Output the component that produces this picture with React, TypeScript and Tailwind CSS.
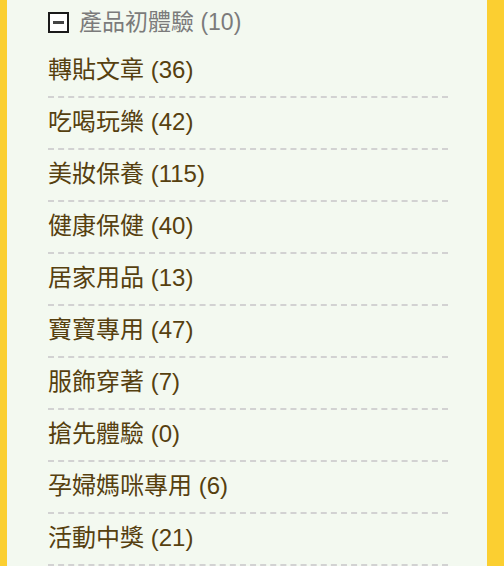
const items = [
  { name: '轉貼文章', count: 36 },
  { name: '吃喝玩樂', count: 42 },
  { name: '美妝保養', count: 115 },
  { name: '健康保健', count: 40 },
  { name: '居家用品', count: 13 },
  { name: '寶寶專用', count: 47 },
  { name: '服飾穿著', count: 7 },
  { name: '搶先體驗', count: 0 },
  { name: '孕婦媽咪專用', count: 6 },
  { name: '活動中獎', count: 21 },
];

export default function App() {
  return (
    <div
      className="h-[566px] w-[504px] overflow-hidden bg-[#fbcf31] pl-[7px] pr-[17px]"
      style={{ fontFamily: '"Liberation Sans", "Noto Sans CJK TC", sans-serif' }}
    >
      <div className="h-full bg-[#f3f9f0] pl-[41px] pr-[39px]">
        {/* Category header */}
        <div className="flex h-[46px] items-start pt-[12px]">
          <span className="flex h-[21px] w-[21px] shrink-0 items-center justify-center border-2 border-[#1a1a1a] bg-white">
            <span className="block h-[3px] w-[11px] bg-[#444]" />
          </span>
          <span className="ml-[10px] text-[23px] leading-[21px] text-[#7b7b7b]">
            產品初體驗 (10)
          </span>
        </div>

        {/* Subcategory list */}
        <ul>
          {items.map((item) => (
            <li
              key={item.name}
              className="flex h-[52px] items-center border-b-2 border-dashed border-[#d2d2d2] pb-[2px] text-[24px] leading-none text-[#56400f]"
            >
              {item.name} ({item.count})
            </li>
          ))}
        </ul>
      </div>
    </div>
  );
}
